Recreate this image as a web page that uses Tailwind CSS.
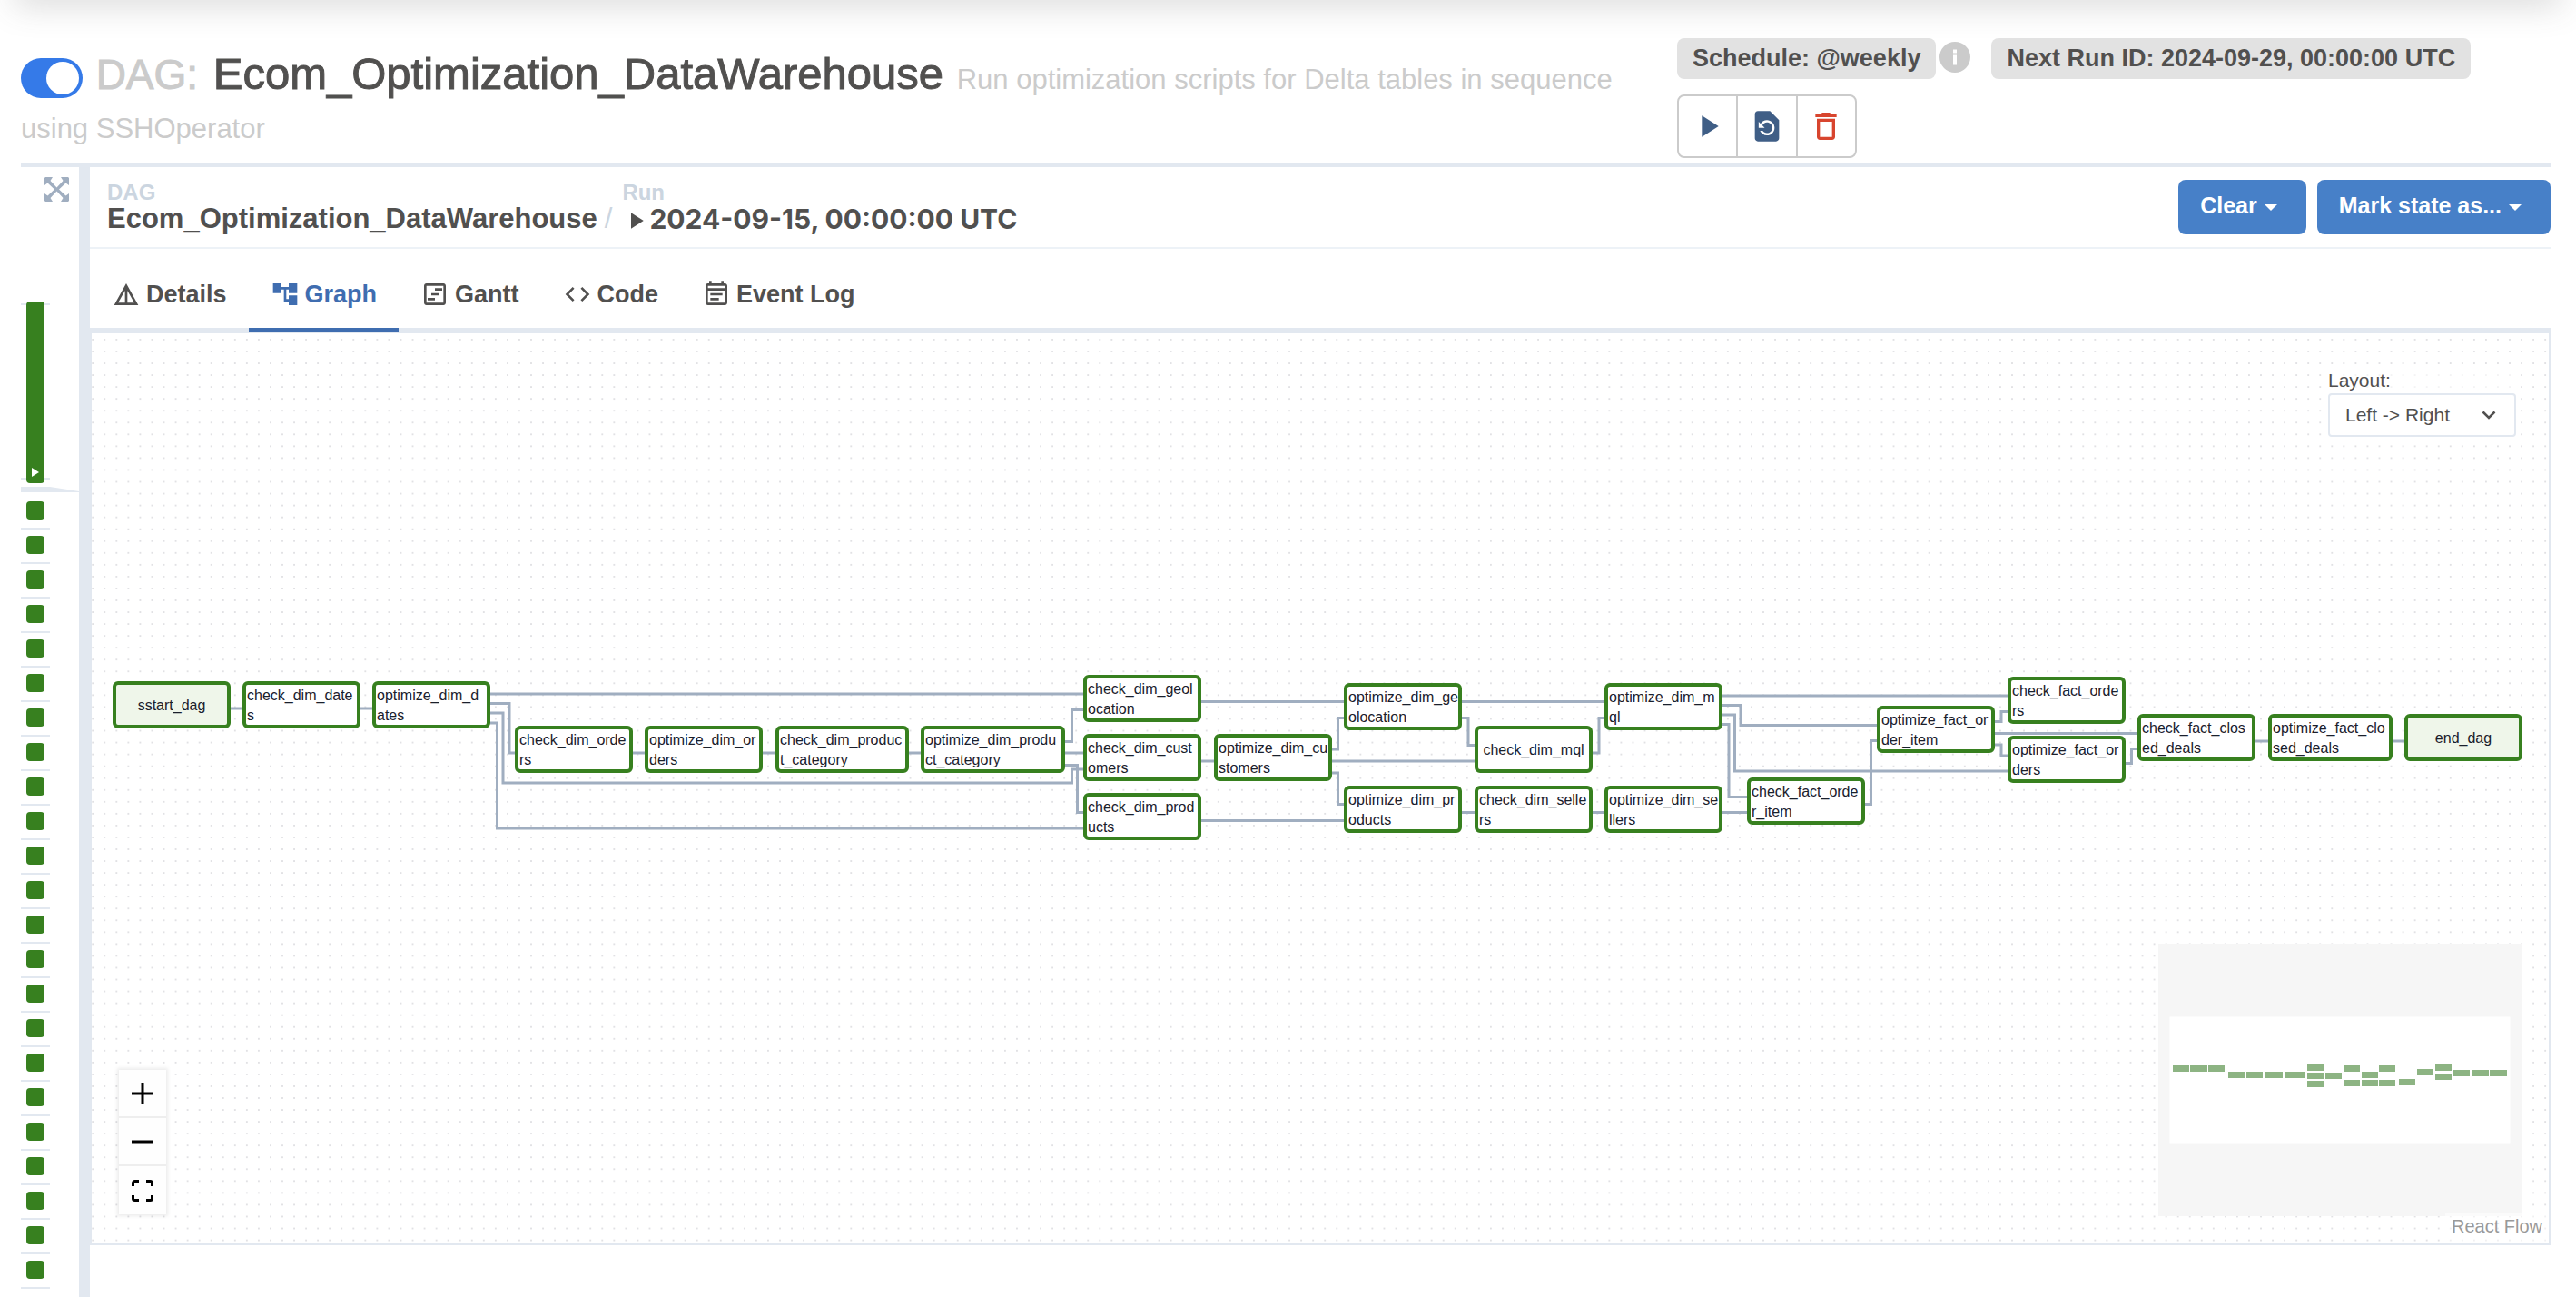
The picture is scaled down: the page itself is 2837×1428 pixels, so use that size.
<!DOCTYPE html>
<html lang="en">
<head>
<meta charset="utf-8">
<title>Ecom_Optimization_DataWarehouse - Graph</title>
<script src="https://cdn.jsdelivr.net/npm/@tailwindcss/browser@4"></script>
</head>
<body class="relative flex min-h-screen flex-col overflow-x-hidden bg-white font-['Liberation_Sans',Arial,sans-serif] text-[#51504f]">
<!-- shadow cast by the navigation bar above -->
<div class="pointer-events-none absolute inset-x-5 -top-5 h-5 shadow-[0_0_36px_4px_#51504f40]"></div>

<header class="flex px-[23px] pb-[6px]">
  <h1 class="flex-1 pt-[57px] pr-6 text-[31px] leading-[54px] text-[#cbcbcb]">
    <input type="checkbox" checked aria-label="Pause or unpause DAG" class="relative inline-block h-11 w-[68px] appearance-none rounded-full bg-[#357ae8] align-[-10px] after:absolute after:top-1 after:right-1 after:size-9 after:rounded-full after:bg-white after:content-['']">
    <span class="ml-1.5 text-[46px] leading-none [-webkit-text-stroke:1px_#cbcbcb]">DAG:</span>
    <a href="#" class="ml-2 text-[49px] leading-none text-[#51504f] [-webkit-text-stroke:1px_#51504f]">Ecom_Optimization_DataWarehouse</a>
    <span class="ml-1.5">Run optimization scripts for Delta tables in sequence using SSHOperator</span>
  </h1>
  <div class="w-[967px] pt-[42px]">
    <div class="flex items-center text-[27px] leading-[45px] font-bold">
      <a href="#" class="rounded-lg bg-[#e2e2e2] px-[17px]">Schedule: @weekly</a>
      <svg class="mb-1 ml-1 size-[34px]" viewBox="0 0 34 34"><circle cx="17" cy="17" r="17" fill="#cbcbcb"/><path d="M15 8.500h4v4h-4zM15 14.500h4v11h-4z" fill="#fff"/></svg>
      <span class="ml-[23px] rounded-lg bg-[#e2e2e2] px-[17px]">Next Run ID: 2024-09-29, 00:00:00 UTC</span>
    </div>
    <div class="mt-[17px] flex h-[70px] w-[198px] divide-x-2 divide-[#cbcbcb] rounded-lg border-2 border-[#cbcbcb]">
      <button class="flex flex-1 items-center justify-center" aria-label="Trigger DAG"><svg class="size-10" viewBox="0 0 24 24" fill="#3f5e86"><path d="M8 5v14l11-7z"/></svg></button>
      <button class="flex flex-1 items-center justify-center" aria-label="Reparse DAG"><svg class="size-10" viewBox="0 0 24 24" fill="#3f5e86"><path d="M14 2H6c-1.100 0-1.990.9-1.990 2L4 20c0 1.100.89 2 1.990 2H18c1.100 0 2-.9 2-2V8l-6-6zm-2 16c-2.050 0-3.810-1.240-4.580-3h1.710c.63.9 1.680 1.500 2.870 1.500 1.930 0 3.500-1.570 3.500-3.500S13.930 9.500 12 9.500c-1.350 0-2.520.78-3.100 1.900l1.600 1.600h-4V9l1.300 1.300C8.690 8.920 10.230 8 12 8c2.760 0 5 2.240 5 5s-2.240 5-5 5z"/></svg></button>
      <button class="flex flex-1 items-center justify-center" aria-label="Delete DAG"><svg class="size-10" viewBox="0 0 24 24" fill="#d8452e"><path d="M6 19c0 1.100.9 2 2 2h8c1.100 0 2-.9 2-2V7H6v12zM8 9h8v10H8V9zm7.500-5l-1-1h-5l-1 1H5v2h14V4z"/></svg></button>
    </div>
  </div>
</header>

<main class="mr-7 ml-[23px] flex flex-1 border-t-4 border-[#e2e8f0]">
  <aside class="w-16">
    <button class="mt-[11px] ml-[26px] block" aria-label="Expand"><svg class="size-[27px]" viewBox="0 0 27 27" fill="#a0aec0"><path d="M1 0h8L6.500 4l7 7.500 7-7.500L18 0h8l1 1v8l-3.500-2.500-7.500 7 7.500 7 3.500-2.500v8l-1 1h-8l2.500-4-7-7.500-7 7.500 2.500 4H1l-1-1v-8l3.500 2.500 7.500-7-7.500-7L0 9V1z"/></svg></button>
    <div class="relative mt-[110px] h-[200px] w-8">
      <div class="absolute inset-x-0 top-0.5 bottom-1 border-y-2 border-[#e2e8f0]"></div>
      <button class="relative ml-1.5 flex h-full w-5 items-end justify-center rounded bg-[#37801f] pb-[7px]" aria-label="Latest run"><svg class="h-[10px] w-2" viewBox="0 0 8 10" fill="#fff"><path d="M0 0v10l8-5z"/></svg></button>
    </div>
    <svg class="mt-1 h-1.5 w-16" viewBox="0 0 64 6" fill="#e2e8f0"><path d="M0 0h32l32 5v1H0z"/></svg>
    <ul id="runs" class="mt-[3px] w-8"></ul>
  </aside>

  <section class="flex min-w-0 flex-1 flex-col border-l-12 border-[#e2e8f0]">
    <div class="flex h-[90px] border-b-2 border-[#edf2f7] pl-[19px]">
      <nav class="flex flex-1 pt-[17px] font-bold" aria-label="Breadcrumb">
        <div>
          <div class="text-[24px] leading-[22px] text-[#cbd5e0]">DAG</div>
          <a href="#" class="block text-[31px] leading-9">Ecom_Optimization_DataWarehouse</a>
        </div>
        <span class="mr-[11px] ml-2 pt-[22px] text-[31px] leading-9 font-normal text-[#cbd5e0]">/</span>
        <div>
          <div class="text-[24px] leading-[22px] text-[#cbd5e0]">Run</div>
          <a href="#" class="flex items-center font-[Inter,'Liberation_Sans',sans-serif] text-[30px] leading-9"><svg class="mt-1 size-[30px]" viewBox="0 0 24 24" fill="currentColor"><path d="M8 5v14l11-7z"/></svg>2024-09-15, 00:00:00 UTC</a>
        </div>
      </nav>
      <div class="flex gap-3 pt-[14px] text-[25px] font-bold text-white">
        <button class="flex h-15 items-center gap-2 rounded-lg bg-[#4780c8] pr-8 pb-0.5 pl-6">Clear<svg class="size-3.5" viewBox="0 0 14 14" fill="#fff"><path d="M0 5h14l-7 7z"/></svg></button>
        <button class="flex h-15 items-center gap-2 rounded-lg bg-[#4780c8] pr-8 pb-0.5 pl-6">Mark state as...<svg class="size-3.5" viewBox="0 0 14 14" fill="#fff"><path d="M0 5h14l-7 7z"/></svg></button>
      </div>
    </div>

    <div class="flex h-[93px] border-b-[6px] border-[#e2e8f0] text-[27px] font-bold" role="tablist">
      <button role="tab" class="flex items-center gap-1.5 px-6 pt-[13px]"><svg class="size-8" viewBox="0 0 24 24" fill="currentColor"><path d="M12 3L2 21h20L12 3zm1 5.920L18.600 19H13V8.920zm-2 0V19H5.400L11 8.920z"/></svg>Details</button>
      <button role="tab" aria-selected="true" class="-mb-1 flex items-center gap-1.5 border-b-4 border-[#3f6db0] px-6 pt-[13px] text-[#3f6db0]"><svg class="size-8" viewBox="0 0 24 24" fill="currentColor"><path d="M22 11V3h-7v3H9V3H2v8h7V8h2v10h4v3h7v-8h-7v3h-2V8h2v3z"/></svg>Graph</button>
      <button role="tab" class="flex items-center gap-1.5 px-6 pt-[13px]"><svg class="size-8" viewBox="0 0 24 24" fill="currentColor"><path d="M19 3H5c-1.100 0-2 .9-2 2v14c0 1.100.9 2 2 2h14c1.100 0 2-.9 2-2V5c0-1.100-.9-2-2-2zm0 16H5V5h14v14zM6 15h6v2H6zM12 7h6v2h-6zM9 11h6v2H9z"/></svg>Gantt</button>
      <button role="tab" class="flex items-center gap-1.5 px-6 pt-[13px]"><svg class="size-8" viewBox="0 0 24 24" fill="currentColor"><path d="M9.400 16.600L4.800 12l4.600-4.600L8 6l-6 6 6 6 1.400-1.400zm5.200 0l4.600-4.600-4.600-4.600L16 6l6 6-6 6-1.400-1.400z"/></svg>Code</button>
      <button role="tab" class="flex items-center gap-1.5 px-6 pt-[13px]"><svg class="size-8" viewBox="0 0 24 24" fill="currentColor"><path d="M19 3h-1V1h-2v2H8V1H6v2H5c-1.100 0-2 .9-2 2v14c0 1.100.9 2 2 2h14c1.100 0 2-.9 2-2V5c0-1.100-.9-2-2-2zm0 16H5V9h14v10zm0-12H5V5h14v2zM7 11h10v2H7zM7 15h7v2H7z"/></svg>Event Log</button>
    </div>

    <!-- graph canvas -->
    <div class="relative mb-[57px] flex-1 border-2 border-t-0 border-[#e2e8f0]">
      <svg class="absolute inset-0 size-full"><defs><pattern id="dots" width="13.048" height="13.048" patternUnits="userSpaceOnUse" x="-5.300" y="0.400"><circle cx="6.500" cy="6.500" r="0.700" fill="#b4b4ba"/></pattern></defs><rect width="100%" height="100%" fill="url(#dots)"/></svg>
      <svg id="edges" class="absolute inset-0 size-full" fill="none" stroke="#a0aec0" stroke-width="3"></svg>
      <div id="nodes"></div>

      <div class="absolute top-[39px] right-9 flex w-[207px] flex-col bg-white/60 text-[21px]">
        <label for="layout" class="pb-px leading-[26px]">Layout:</label>
        <div class="relative">
          <select id="layout" class="h-12 w-full appearance-none rounded-sm border-2 border-[#e2e8f0] bg-white pl-[17px]"><option>Left -&gt; Right</option></select>
          <svg class="pointer-events-none absolute top-[19px] right-[22px] h-2.5 w-4" viewBox="0 0 16 10" fill="none" stroke="#51504f" stroke-width="2.500"><path d="M1.500 1.500l6.500 6.500 6.500-6.500"/></svg>
        </div>
      </div>

      <div class="absolute bottom-8 left-[30px] w-[52px] divide-y-2 divide-[#eee] bg-[#fefefe] shadow-[0_0_4px_2px_#00000014]">
        <button class="flex h-[53px] w-full items-center justify-center" aria-label="Zoom in"><svg class="size-6" viewBox="0 0 24 24" stroke="#000" stroke-width="3"><path d="M0 12h24M12 0v24"/></svg></button>
        <button class="flex h-[53px] w-full items-center justify-center" aria-label="Zoom out"><svg class="size-6" viewBox="0 0 24 24" stroke="#000" stroke-width="3"><path d="M0 12h24"/></svg></button>
        <button class="flex h-[53px] w-full items-center justify-center" aria-label="Fit view"><svg class="size-6" viewBox="0 0 24 24" fill="none" stroke="#000" stroke-width="3"><path d="M1.500 7V3.500a2 2 0 0 1 2-2H8M16 1.500h4.500a2 2 0 0 1 2 2V7M22.500 17v3.500a2 2 0 0 1-2 2H16M8 22.500H3.500a2 2 0 0 1-2-2V17"/></svg></button>
      </div>

      <svg id="minimap" class="absolute right-[30px] bottom-[30px] h-[300px] w-[400px] bg-[#f6f6f6]" viewBox="0 0 400 300"><rect x="12.500" y="80.500" width="375" height="139" fill="#fff"/></svg>
      <a href="#" class="absolute right-0 bottom-0 bg-white/50 px-[7px] pb-1 text-[20px] leading-[30px] text-[#999]">React Flow</a>
    </div>
  </section>
</main>

<script>
  // previous runs, newest first
  document.getElementById('runs').innerHTML = Array.from({ length: 23 }, (_, i) =>
    `<li class="h-[38px] border-b-2 border-[#e2e8f0] pt-[7px] pl-1.5"><button class="block size-5 rounded bg-[#37801f]" aria-label="Run ${i + 1}"></button></li>`).join('');

  // tasks: left, top, width, label lines, operator without a body
  const tasks = [
    [23, 383, 130, ['sstart_dag'], true], [166, 383, 130, ['check_dim_date', 's']], [309, 383, 130, ['optimize_dim_d', 'ates']],
    [466, 432, 130, ['check_dim_orde', 'rs']], [609, 432, 130, ['optimize_dim_or', 'ders']],
    [753, 432, 147, ['check_dim_produc', 't_category']], [913, 432, 159, ['optimize_dim_produ', 'ct_category']],
    [1092, 376, 130, ['check_dim_geol', 'ocation']], [1092, 441, 130, ['check_dim_cust', 'omers']], [1092, 506, 130, ['check_dim_prod', 'ucts']],
    [1236, 441, 130, ['optimize_dim_cu', 'stomers']], [1379, 385, 130, ['optimize_dim_ge', 'olocation']], [1379, 498, 130, ['optimize_dim_pr', 'oducts']],
    [1523, 432, 130, ['check_dim_mql']], [1523, 498, 130, ['check_dim_selle', 'rs']],
    [1666, 385, 130, ['optimize_dim_m', 'ql']], [1666, 498, 130, ['optimize_dim_se', 'llers']],
    [1823, 489, 130, ['check_fact_orde', 'r_item']], [1966, 410, 130, ['optimize_fact_or', 'der_item']],
    [2110, 378, 130, ['check_fact_orde', 'rs']], [2110, 443, 130, ['optimize_fact_or', 'ders']],
    [2253, 419, 130, ['check_fact_clos', 'ed_deals']], [2397, 419, 137, ['optimize_fact_clo', 'sed_deals']], [2547, 419, 130, ['end_dag'], true]
  ];
  document.getElementById('nodes').innerHTML = tasks.map(([x, y, w, lines, empty]) =>
    `<div class="absolute flex h-13 items-center rounded-md border-4 border-[#37801f] px-px pt-0.5 text-[16px] leading-[22px] whitespace-nowrap text-[#1a202c] ${lines.length === 1 ? 'justify-center' : ''} ${empty ? 'bg-[#eff6ea]' : 'bg-white'}" style="left:${x}px;top:${y}px;width:${w}px"><span>${lines.join('<br>')}</span></div>`).join('');

  const edges = [
    'M153 413H166', 'M296 413H309', 'M439 397H1092', 'M439 407.500H460V462H466', 'M439 418H453V495H1079.500V480H1092', 'M439 429H446.500V545H1092',
    'M596 462H609', 'M739 462H753', 'M900 462H913', 'M1072 462H1092', 'M1072 449.500H1079.500V414.500H1092', 'M1072 475.500H1085.500V527.500H1092',
    'M1222 405.500H1379', 'M1222 471H1236', 'M1222 536.500H1379', 'M1366 458H1372.500V423.500H1379', 'M1366 471H1523', 'M1366 484H1372.500V518.500H1379',
    'M1509 405.500H1666', 'M1509 423.500H1516V453.500H1523', 'M1653 462H1660V423.500H1666', 'M1509 527.500H1523', 'M1653 527.500H1666', 'M1796 527.500H1823',
    'M1796 399H2110', 'M1796 409.500H1816V431.500H1966', 'M1796 420H1809.500V482H2110', 'M1796 430.500H1803V510.500H1823',
    'M1953 518.500H1959.500V448.500H1966', 'M2096 427.500H2103V416.500H2110', 'M2096 440.500H2253', 'M2096 453H2103V465H2110',
    'M2240 473.500H2246.500V457.500H2253', 'M2383 449H2397', 'M2534 449H2547'
  ];
  document.getElementById('edges').innerHTML = edges.map(d => `<path d="${d}"/>`).join('');

  const mini = [[16,134,18],[35,134,19],[55,134,18],[77,141,18],[97,141,18],[117,141,20],[139,141,22],[164,133,18],[164,142,18],[164,151,18],[184,142,18],[204,134,18],[204,150,18],[224,141,18],[224,150,18],[243,134,18],[243,150,18],[265,149,18],[285,138,18],[305,133,18],[305,143,18],[325,139,18],[345,139,19],[365,139,19]];
  document.getElementById('minimap').innerHTML += mini.map(([x, y, w]) => `<rect x="${x}" y="${y}" width="${w}" height="7" fill="#8db483"/>`).join('');
</script>
</body>
</html>
